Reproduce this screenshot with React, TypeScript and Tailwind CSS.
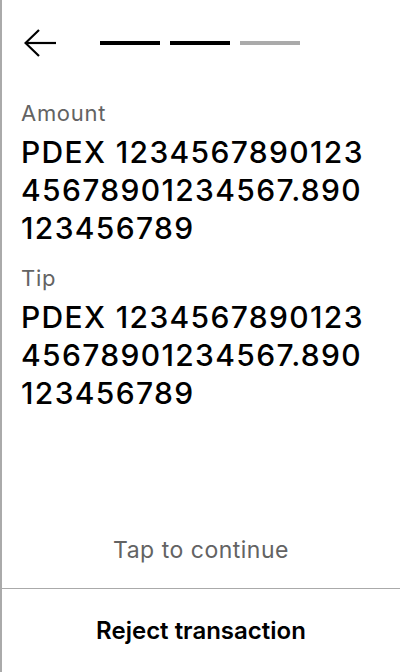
const font = { fontFamily: 'Inter, "Noto Sans", sans-serif' };

function BackArrow() {
  return (
    <svg width="34" height="30" viewBox="0 0 34 30" fill="none" stroke="#000" strokeWidth="2.2">
      <path d="M1.5 15 H32" />
      <path d="M15 2 L1.5 15 L15 28" />
    </svg>
  );
}

function Field({ label, value }: { label: string; value: string[] }) {
  return (
    <div>
      <div className="text-[22px] leading-[30px] tracking-[0.7px] text-[#636363] mb-[5px]">{label}</div>
      <div className="text-[30px] leading-[38px] tracking-[1.35px] font-medium text-black">
        {value.map((line) => (
          <div key={line}>{line}</div>
        ))}
      </div>
    </div>
  );
}

export default function App() {
  const amount = ['PDEX 1234567890123', '45678901234567.890', '123456789'];
  return (
    <div style={font} className="h-[672px] w-[400px] bg-white border-l-2 border-[#aaa] flex flex-col">
      <div className="flex items-center pt-[28px] pl-[22px] h-[58px]">
        <BackArrow />
        <div className="flex gap-[10px] ml-[42px]">
          <div className="w-[60px] h-[4px] bg-black" />
          <div className="w-[60px] h-[4px] bg-black" />
          <div className="w-[60px] h-[4px] bg-[#aaa]" />
        </div>
      </div>
      <div className="px-[19px] pt-[40px] flex flex-col gap-[16px]">
        <Field label="Amount" value={amount} />
        <Field label="Tip" value={amount} />
      </div>
      <div className="mt-auto">
        <div className="text-center text-[23px] leading-[32px] tracking-[0.5px] text-[#636363] pb-[22px]">
          Tap to continue
        </div>
        <div className="border-t border-[#aaa] h-[84px] flex items-center justify-center">
          <span className="text-[24px] font-semibold text-black">Reject transaction</span>
        </div>
      </div>
    </div>
  );
}
